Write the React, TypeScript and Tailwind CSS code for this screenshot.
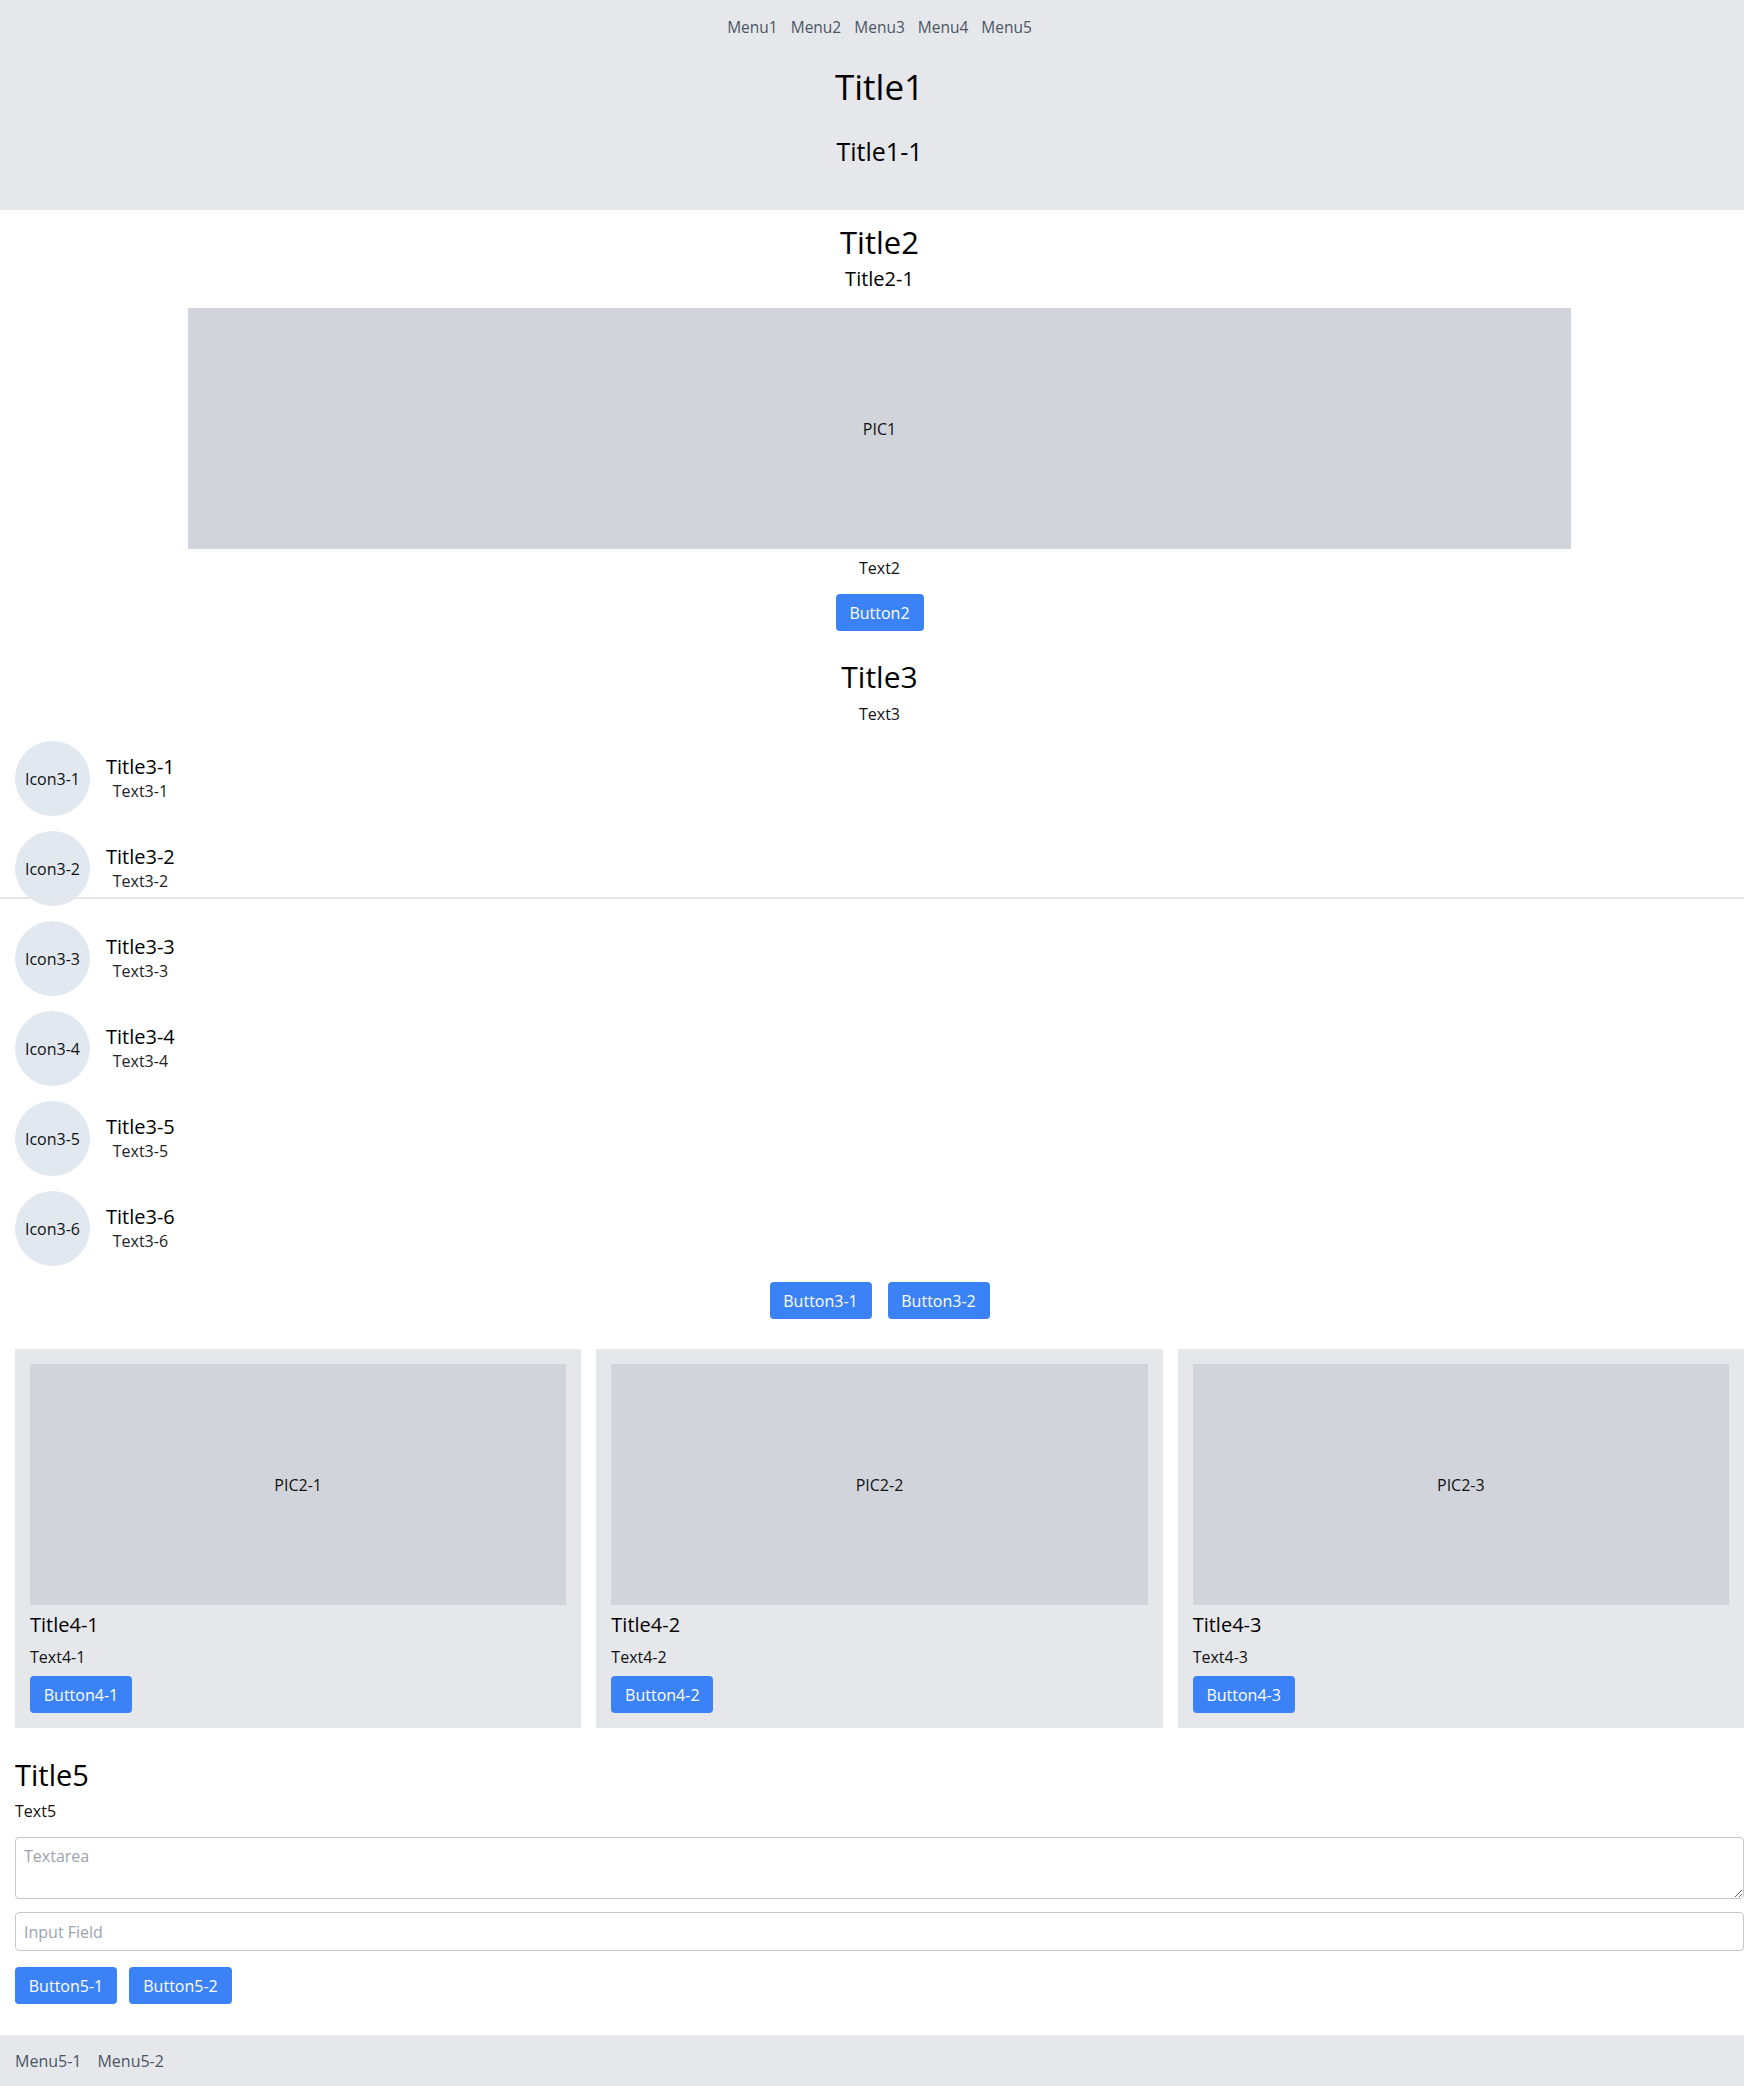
import React from "react";

const font = "font-['Open_Sans',_'Noto_Sans',_sans-serif]";

function Btn({ children, w }: { children: React.ReactNode; w: string }) {
  return (
    <button
      className={`${w} h-[37px] rounded-[4px] bg-[#3b82f6] text-white text-[16px] leading-[22px] flex items-center justify-center`}
    >
      {children}
    </button>
  );
}

const items = [1, 2, 3, 4, 5, 6];
const cards = [1, 2, 3];

export default function App() {
  return (
    <div className={`${font} relative bg-white text-[#111] min-h-[2086px] flex flex-col`}>
      {/* Header */}
      <header className="bg-[#e5e7eb] h-[210px] pl-[15px] flex flex-col items-center">
        <nav className="pt-[16px] flex gap-[13px] text-[15.5px] leading-[22px] text-[#4b5563]">
          <span>Menu1</span>
          <span>Menu2</span>
          <span>Menu3</span>
          <span>Menu4</span>
          <span>Menu5</span>
        </nav>
        <h1 className="mt-[27px] text-[35px] leading-[44px] text-black">Title1</h1>
        <h2 className="mt-[26px] text-[25px] leading-[32px] text-black">Title1-1</h2>
      </header>

      <main className="pl-[15px] flex flex-col">
        {/* Section 2 */}
        <section className="flex flex-col items-center">
          <h2 className="mt-[12px] text-[31px] leading-[40px] text-black">Title2</h2>
          <h3 className="mt-[3px] text-[20px] leading-[28px] text-black">Title2-1</h3>
          <div className="mt-[15px] w-4/5 h-[241px] bg-[#d1d5db] flex items-center justify-center text-[16px]">
            PIC1
          </div>
          <p className="mt-[7px] text-[16px] leading-[24px]">Text2</p>
          <div className="mt-[14px]">
            <Btn w="w-[88px]">Button2</Btn>
          </div>
        </section>

        {/* Section 3 */}
        <section className="flex flex-col">
          <h2 className="mt-[26px] self-center text-[30px] leading-[40px] text-black">Title3</h2>
          <p className="mt-[5px] self-center text-[16px] leading-[24px]">Text3</p>
          <ul className="mt-[15px] flex flex-col gap-[15px]">
            {items.map((i) => (
              <li key={i} className="flex items-center gap-[16px]">
                <div className="w-[75px] h-[75px] rounded-full bg-[#e2e8f0] flex items-center justify-center text-[16px] leading-[22px]">
                  Icon3-{i}
                </div>
                <div className="flex flex-col items-center">
                  <span className="text-[20px] leading-[26px] text-black">Title3-{i}</span>
                  <span className="text-[16px] leading-[23px] text-[#222]">Text3-{i}</span>
                </div>
              </li>
            ))}
          </ul>
          <div className="mt-[16px] flex justify-center gap-[16px]">
            <Btn w="w-[102px]">Button3-1</Btn>
            <Btn w="w-[102px]">Button3-2</Btn>
          </div>
        </section>

        {/* Section 4 */}
        <section className="mt-[30px] grid grid-cols-3 gap-[15px]">
          {cards.map((c) => (
            <div key={c} className="bg-[#e5e7eb] p-[15px] flex flex-col items-start">
              <div className="w-full h-[241px] bg-[#d1d5db] flex items-center justify-center text-[16px]">
                PIC2-{c}
              </div>
              <h3 className="mt-[6px] text-[20px] leading-[28px] text-black">Title4-{c}</h3>
              <p className="mt-[7px] text-[16px] leading-[22px]">Text4-{c}</p>
              <div className="mt-[8px]">
                <Btn w="w-[102px]">Button4-{c}</Btn>
              </div>
            </div>
          ))}
        </section>

        {/* Section 5 */}
        <section className="flex flex-col">
          <h2 className="mt-[28px] text-[29px] leading-[38px] text-black">Title5</h2>
          <p className="mt-[5px] text-[16px] leading-[24px]">Text5</p>
          <textarea
            placeholder="Textarea"
            className="mt-[14px] w-full h-[62px] border border-[#c4c7cc] rounded-[4px] px-[8px] py-[7px] text-[16px] leading-[22px] placeholder:text-[#9ca3af] outline-none"
          />
          <input
            placeholder="Input Field"
            className="mt-[13px] w-full h-[39px] border border-[#c4c7cc] rounded-[4px] px-[8px] text-[16px] placeholder:text-[#9ca3af] outline-none"
          />
          <div className="mt-[16px] flex gap-[12px]">
            <Btn w="w-[102px]">Button5-1</Btn>
            <Btn w="w-[103px]">Button5-2</Btn>
          </div>
        </section>
      </main>

      <footer className="mt-[31px] bg-[#e5e7eb] h-[51px] pl-[15px] flex items-center gap-[16px] text-[16px] leading-[24px] text-[#4b5563]">
        <span>Menu5-1</span>
        <span>Menu5-2</span>
      </footer>

      <div className="absolute left-0 right-0 top-[897px] h-[2px] bg-[#e5e7eb]" />
    </div>
  );
}
